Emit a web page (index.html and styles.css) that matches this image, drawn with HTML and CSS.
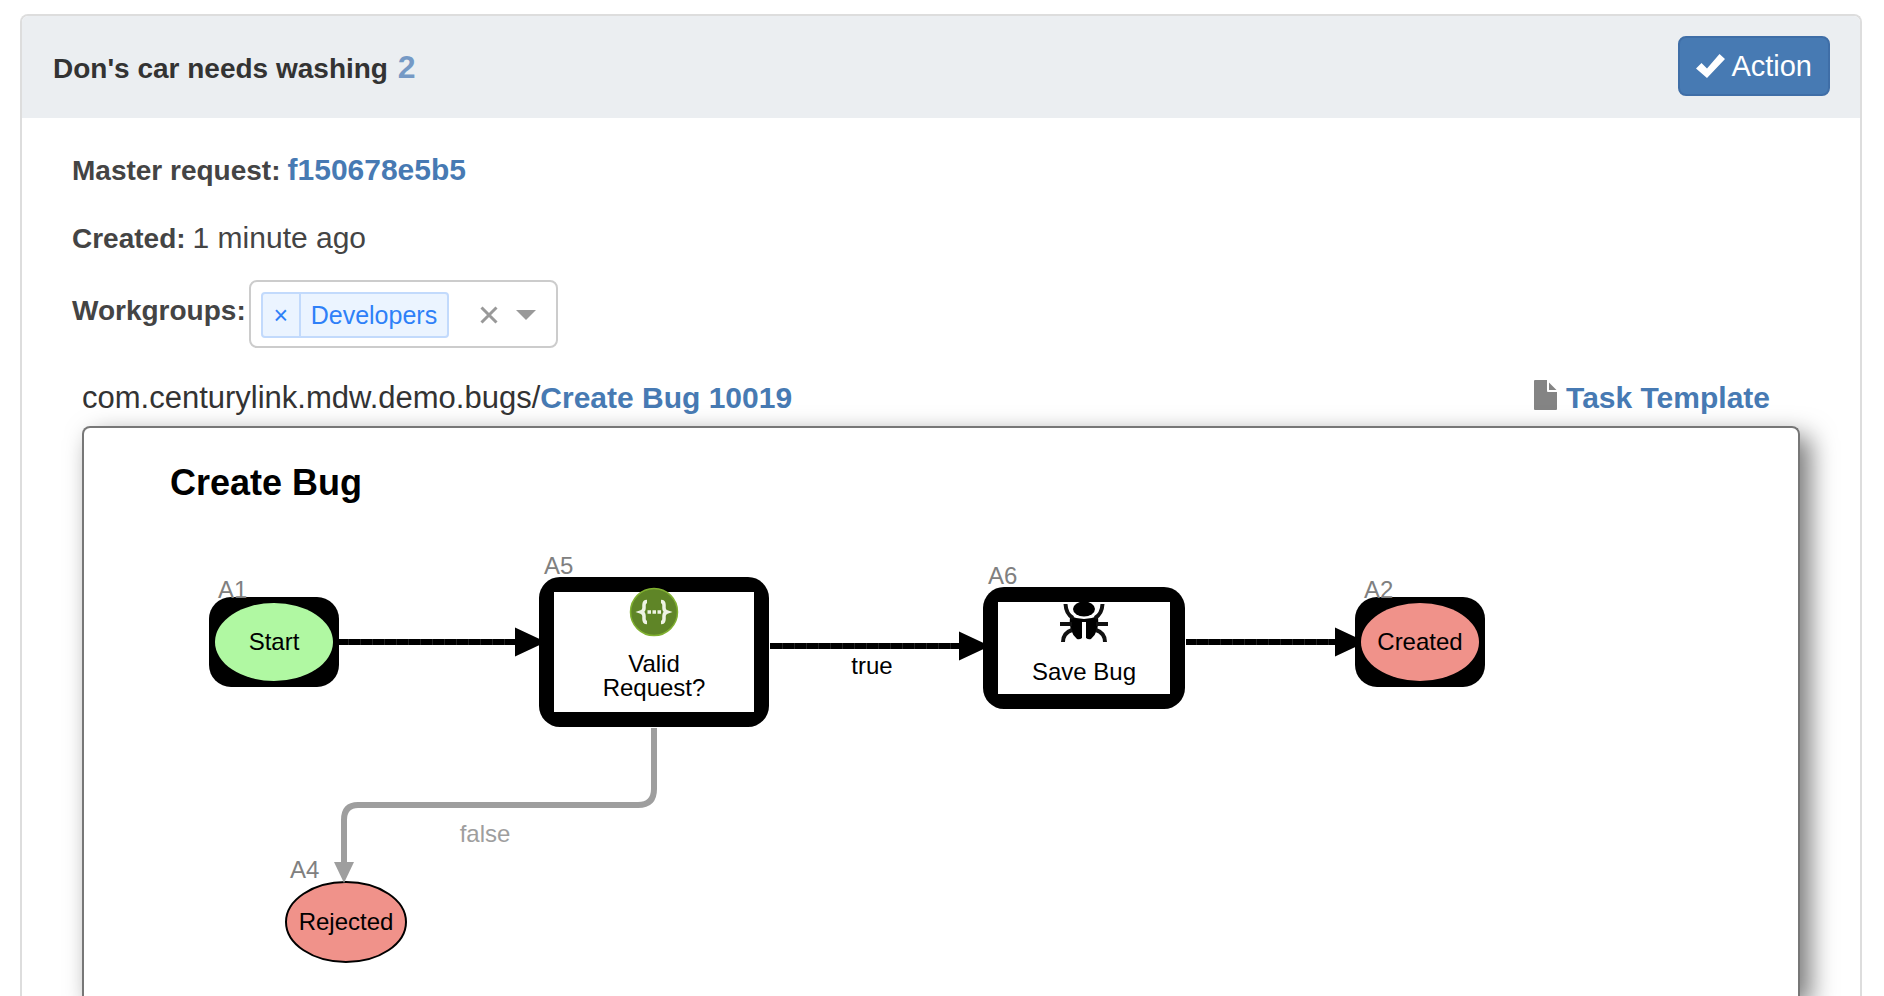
FILE: index.html
```html
<!DOCTYPE html>
<html lang="en">
<head>
<meta charset="utf-8">
<title>Don's car needs washing</title>
<link rel="stylesheet" href="styles.css">
</head>
<body>
<main class="panel">
  <header class="panel-head">
    <h1 class="title">Don's car needs washing <span class="task-id">2</span></h1>
    <button class="action" type="button">
      <svg class="check" viewBox="0 0 29 24" aria-hidden="true"><path d="M0 14.500L5.500 9L11 14.500L23.500 0L29 5L11 24Z" fill="#fff"/></svg>
      <span>Action</span>
    </button>
  </header>
  <section class="fields">
    <div class="field"><span class="label">Master request:</span> <a class="link" href="#">f150678e5b5</a></div>
    <div class="field"><span class="label">Created:</span> <span>1 minute ago</span></div>
    <div class="field field-groups">
      <span class="label" id="groups-label">Workgroups:</span>
      <div class="picker" role="group" aria-labelledby="groups-label">
        <span class="tag"><button class="tag-remove" type="button" aria-label="Remove Developers">×</button><span class="tag-name">Developers</span></span>
        <button class="icon-button" type="button" aria-label="Clear"><svg width="18" height="18" viewBox="0 0 18 18"><path d="M1.500 1.500L16.500 16.500M16.500 1.500L1.500 16.500" stroke="#999" stroke-width="3"/></svg></button>
        <button class="icon-button" type="button" aria-label="Open"><svg width="20" height="10" viewBox="0 0 20 10"><path d="M0 0H20L10 10Z" fill="#999"/></svg></button>
      </div>
    </div>
  </section>
  <section class="process">
    <div class="process-head">
      <div><span class="package">com.centurylink.mdw.demo.bugs/</span><a class="link" href="#">Create Bug 10019</a></div>
      <a class="link template" href="#"><svg class="file" viewBox="0 0 23 30" aria-hidden="true"><path d="M1 0H13V11Q13 12 14 12H23V29Q23 30 22 30H1Q0 30 0 29V1Q0 0 1 0ZM15 2.500L22.500 10H15Z" fill="#848484"/></svg>Task Template</a>
    </div>
    <div class="canvas">
      <svg class="diagram" width="1500" height="620" viewBox="0 0 1500 620" role="img" aria-label="Create Bug process">
        <text class="diagram-title" x="86" y="67">Create Bug</text>

        <path class="flow" d="M255 214H435M686 218H880M1102 214H1256"/>
        <path class="flow-seams" d="M264 214H435M698 218H880M1112 214H1256"/>
        <path d="M431 199.500L462 214L431 228.500ZM875 203.500L906 218L875 232.500ZM1251 199.500L1282 214L1251 228.500Z"/>
        <path class="flow-idle" d="M570 300V361Q570 377 554 377H274Q260 377 260 392V436"/>

        <rect x="125" y="169" width="130" height="90" rx="22"/>
        <ellipse cx="190" cy="214" rx="59" ry="39" fill="#b0f8a2"/>
        <text class="name" x="190" y="222">Start</text>

        <rect x="455" y="149" width="230" height="150" rx="21"/>
        <rect x="470" y="164" width="200" height="120" fill="#fff"/>
        <circle cx="570" cy="184" r="23.500" fill="#5f8527" stroke="#80b030" stroke-width="1.500"/>
        <path d="M563 173.500Q560 173.500 560 177V180Q560 183 557 184Q560 185 560 188V191Q560 194.500 563 194.500M577 173.500Q580 173.500 580 177V180Q580 183 583 184Q580 185 580 188V191Q580 194.500 577 194.500" fill="none" stroke="#eef3e4" stroke-width="3.500"/>
        <path d="M563.500 184H577" stroke="#eef3e4" stroke-width="3.500" stroke-dasharray="3.500 1.500"/>
        <text class="name" x="570" y="244">Valid</text>
        <text class="name" x="570" y="268">Request?</text>

        <rect x="899" y="159" width="202" height="122" rx="21"/>
        <rect x="914" y="174" width="172" height="92" fill="#fff"/>
        <ellipse cx="1000" cy="181" rx="11" ry="7.500"/>
        <path d="M986 188Q1000 194 1014 188Q1016 203 1007 211Q1004.500 212 1002 210V194H998V210Q995.500 212 993 211Q984 203 986 188Z"/>
        <path d="M981.500 176Q982 186 989 190M1018.500 176Q1018 186 1011 190M976 196H988M1024 196H1012M979 214Q979 205 988 202M1021 214Q1021 205 1012 202" fill="none" stroke="#111" stroke-width="4"/>
        <text class="name" x="1000" y="252">Save Bug</text>

        <rect x="1271" y="169" width="130" height="90" rx="22"/>
        <ellipse cx="1336" cy="214" rx="59" ry="39" fill="#f0928a"/>
        <text class="name" x="1336" y="222">Created</text>

        <ellipse cx="262" cy="494" rx="60" ry="40" fill="#f0928a" stroke="#000" stroke-width="2"/>
        <path d="M250 434H270L260 455Z" fill="#9e9e9e"/>
        <text class="name" x="262" y="502">Rejected</text>

        <text class="name" x="788" y="246">true</text>
        <text class="name idle" x="401" y="414">false</text>
        <text class="tagline" x="134" y="170">A1</text>
        <text class="tagline" x="460" y="146">A5</text>
        <text class="tagline" x="904" y="156">A6</text>
        <text class="tagline" x="1280" y="170">A2</text>
        <text class="tagline" x="206" y="450">A4</text>
      </svg>
    </div>
  </section>
</main>
</body>
</html>
```
FILE: styles.css
```css
* { box-sizing: border-box; }

body {
  margin: 0;
  padding: 14px 22px 0 20px;
  height: 100vh;
  overflow: hidden;
  display: flex;
  background: #fff;
  color: #333;
  font-family: "Liberation Sans", Arial, sans-serif;
  font-size: 30px;
  line-height: 40px;
}

button {
  font: inherit;
  margin: 0;
  padding: 0;
  border: 0;
  background: none;
  cursor: pointer;
}

.panel {
  flex: 1;
  min-width: 0;
  display: flex;
  flex-direction: column;
  border: 2px solid #ddd;
  border-bottom: 0;
  border-radius: 8px 8px 0 0;
}

.panel-head {
  display: flex;
  align-items: flex-start;
  justify-content: space-between;
  padding: 20px 30px 22px;
  background: #ebeef1;
  border-radius: 6px 6px 0 0;
}

.title {
  margin: 0;
  padding: 11px 0 0 1px;
  font-size: 28px;
  line-height: 40px;
}

.task-id {
  margin-left: 2px;
  font-size: 32px;
  color: #7599c5;
}

.action {
  display: flex;
  align-items: center;
  gap: 6px;
  height: 60px;
  padding: 0 16px;
  border: 2px solid #3f6ea7;
  border-radius: 8px;
  background: #477ab3;
  color: #fff;
  font-size: 29px;
}

.check { width: 29px; height: 24px; }

.fields {
  padding: 32px 50px 0;
  color: #444;
}

.field {
  display: flex;
  align-items: baseline;
  gap: 7px;
  height: 40px;
  margin-bottom: 28px;
}

.label {
  font-size: 28px;
  font-weight: bold;
}

.link {
  color: #477ab3;
  font-weight: bold;
  text-decoration: none;
}

.field-groups {
  align-items: flex-start;
  gap: 3px;
  height: 68px;
  margin: -6px 0 0;
}

.field-groups .label { padding-top: 11px; }

.picker {
  display: flex;
  align-items: center;
  gap: 18px;
  height: 68px;
  padding: 2px 20px 0 10px;
  border: 2px solid #ccc;
  border-radius: 8px;
}

.tag {
  display: flex;
  height: 46px;
  margin-right: 13px;
  border: 2px solid #c2dafc;
  border-radius: 4px;
  background: #ebf4ff;
  color: #2e80f8;
  font-size: 25px;
  line-height: 42px;
}

.tag-remove {
  width: 38px;
  border-right: 2px solid #c2dafc;
  color: inherit;
}

.tag-name { padding: 0 10px; }

.icon-button { display: flex; }

.process {
  flex: 1;
  min-height: 0;
  display: flex;
  flex-direction: column;
  padding: 30px 60px 0;
}

.process-head {
  display: flex;
  justify-content: space-between;
  height: 40px;
  padding-right: 30px;
  margin-bottom: 8px;
}

.package { font-size: 31px; }

.template {
  display: flex;
  gap: 9px;
}

.file { width: 23px; height: 30px; margin-top: 2px; }

.canvas {
  flex: 1;
  min-height: 0;
  overflow: hidden;
  border: 2px solid #777;
  border-bottom: 0;
  border-radius: 8px 8px 0 0;
  box-shadow: 10px 10px 26px #777;
}

.diagram { display: block; }

.diagram-title { font-size: 36px; font-weight: bold; }

.name { font-size: 24px; text-anchor: middle; }

.idle { fill: #9e9e9e; }

.tagline { font-size: 24px; fill: #808080; }

.flow { fill: none; stroke: #000; stroke-width: 6; }

.flow-seams { fill: none; stroke: #222; stroke-width: 6; stroke-dasharray: 1 11; }

.flow-idle { fill: none; stroke: #9e9e9e; stroke-width: 6; }
```
